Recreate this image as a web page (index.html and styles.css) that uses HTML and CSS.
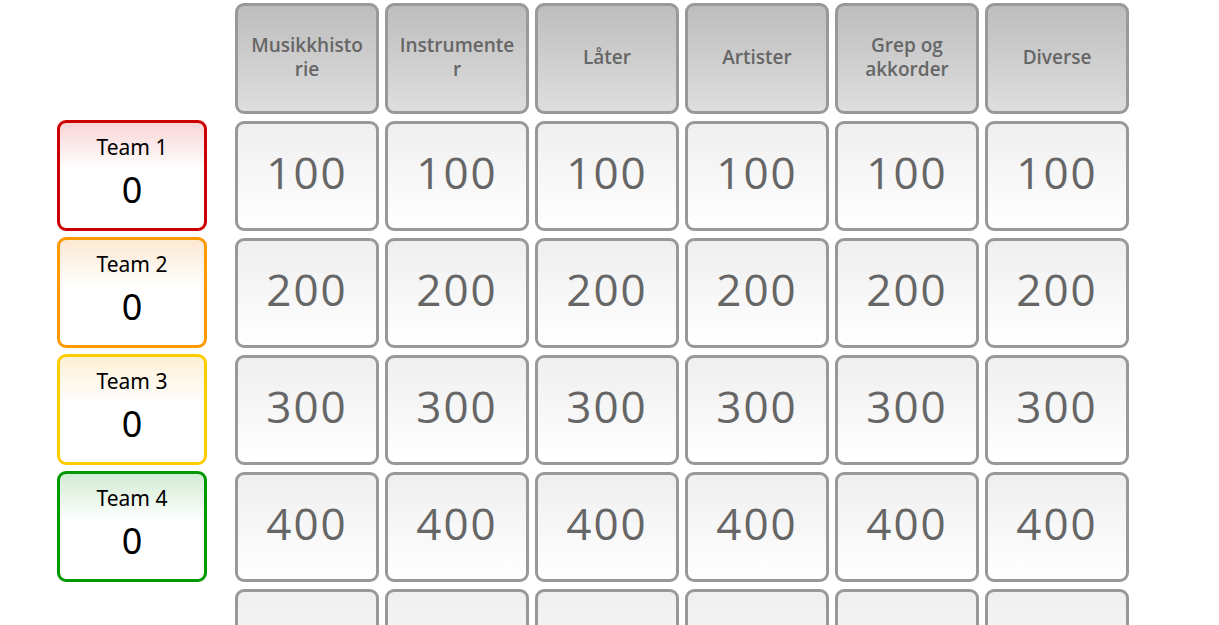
FILE: index.html
```html
<!DOCTYPE html>
<html lang="no">
<head>
<meta charset="utf-8">
<title>Jeopardy</title>
<link rel="stylesheet" href="styles.css">
</head>
<body>
<div class="page">
  <div class="teams">
    <div class="team team-1"><div class="team-name">Team 1</div><div class="team-score">0</div></div>
    <div class="team team-2"><div class="team-name">Team 2</div><div class="team-score">0</div></div>
    <div class="team team-3"><div class="team-name">Team 3</div><div class="team-score">0</div></div>
    <div class="team team-4"><div class="team-name">Team 4</div><div class="team-score">0</div></div>
  </div>
  <div class="board">
    <div class="cat">Musikkhisto<br>rie</div>
    <div class="cat">Instrumente<br>r</div>
    <div class="cat">Låter</div>
    <div class="cat">Artister</div>
    <div class="cat">Grep og<br>akkorder</div>
    <div class="cat">Diverse</div>

    <div class="q">100</div><div class="q">100</div><div class="q">100</div><div class="q">100</div><div class="q">100</div><div class="q">100</div>
    <div class="q">200</div><div class="q">200</div><div class="q">200</div><div class="q">200</div><div class="q">200</div><div class="q">200</div>
    <div class="q">300</div><div class="q">300</div><div class="q">300</div><div class="q">300</div><div class="q">300</div><div class="q">300</div>
    <div class="q">400</div><div class="q">400</div><div class="q">400</div><div class="q">400</div><div class="q">400</div><div class="q">400</div>
    <div class="q">500</div><div class="q">500</div><div class="q">500</div><div class="q">500</div><div class="q">500</div><div class="q">500</div>
  </div>
</div>
</body>
</html>
```

FILE: styles.css
```css
html, body {
  margin: 0;
  padding: 0;
  background: #fff;
}

.page {
  display: flex;
  align-items: flex-start;
  padding: 3px 0 0 57px;
}

.teams {
  display: flex;
  flex-direction: column;
  gap: 6px;
  margin-top: 117px;
  width: 150px;
}

.team {
  box-sizing: border-box;
  height: 111px;
  border: 3px solid #c00;
  border-radius: 9px;
  display: flex;
  flex-direction: column;
  align-items: center;
  font-family: "Noto Sans", "Open Sans", sans-serif;
  color: #000;
}

.team-1 { border-color: #cc0000; background: linear-gradient(to bottom, #f9d6d6 0%, #ffffff 45%); }
.team-2 { border-color: #ff9900; background: linear-gradient(to bottom, #fde9d3 0%, #ffffff 45%); }
.team-3 { border-color: #ffcc00; background: linear-gradient(to bottom, #fdf0d6 0%, #ffffff 45%); }
.team-4 { border-color: #009900; background: linear-gradient(to bottom, #d3ecd3 0%, #ffffff 45%); }

.team-name {
  font-size: 21px;
  line-height: 26px;
  margin-top: 11px;
}

.team-score {
  font-size: 36px;
  line-height: 44px;
  margin-top: 8px;
}

.board {
  margin-left: 28px;
  display: grid;
  grid-template-columns: repeat(6, 144px);
  grid-auto-rows: 110px;
  grid-template-rows: 111px;
  column-gap: 6px;
  row-gap: 7px;
}

.cat, .q {
  box-sizing: border-box;
  border: 3px solid #999;
  border-radius: 9px;
  display: flex;
  align-items: center;
  justify-content: center;
  text-align: center;
  color: #666;
}

.cat {
  background: linear-gradient(to bottom, #bdbdbd 0%, #dedede 100%);
  font-family: "Open Sans", "Noto Sans", sans-serif;
  font-weight: 600;
  font-size: 19px;
  line-height: 24px;
  padding: 0 2px 3px;
}

.q {
  background: linear-gradient(to bottom, #efefef 0%, #ffffff 100%);
  font-family: "Open Sans", "Noto Sans", sans-serif;
  font-size: 44px;
  letter-spacing: 2px;
  padding-bottom: 8px;
}
```
